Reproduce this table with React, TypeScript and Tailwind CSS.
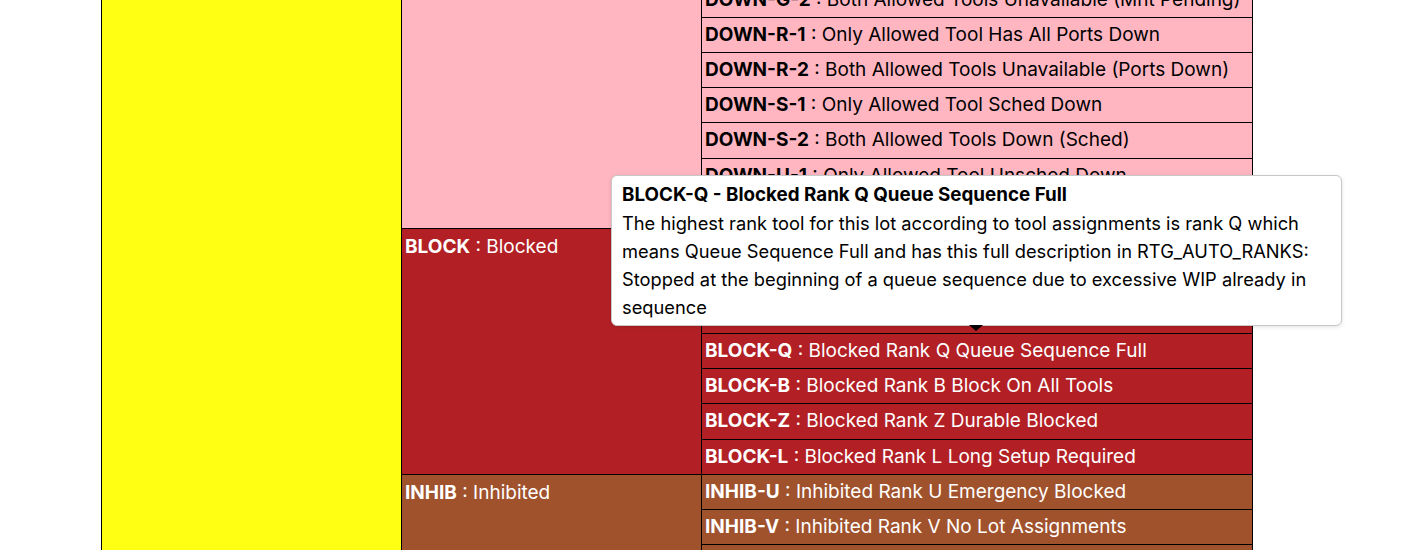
import React from "react";

type Row = { code: string; text: string };

type Group = {
  code: string;
  text: string;
  bg: string;
  fg: string;
  rows: Row[];
};

const groups: Group[] = [
  {
    code: "DOWN",
    text: "Down",
    bg: "bg-[#ffb6c1]",
    fg: "text-black",
    rows: [
      { code: "DOWN-M-1", text: "Only Allowed Tool Mnt Down" },
      { code: "DOWN-M-2", text: "Both Allowed Tools Down (Mnt)" },
      { code: "DOWN-G-1", text: "Only Allowed Tool Unavailable (Mnt Pending)" },
      { code: "DOWN-G-2", text: "Both Allowed Tools Unavailable (Mnt Pending)" },
      { code: "DOWN-R-1", text: "Only Allowed Tool Has All Ports Down" },
      { code: "DOWN-R-2", text: "Both Allowed Tools Unavailable (Ports Down)" },
      { code: "DOWN-S-1", text: "Only Allowed Tool Sched Down" },
      { code: "DOWN-S-2", text: "Both Allowed Tools Down (Sched)" },
      { code: "DOWN-U-1", text: "Only Allowed Tool Unsched Down" },
      { code: "DOWN-U-2", text: "Both Allowed Tools Down (Unsched)" },
    ],
  },
  {
    code: "BLOCK",
    text: "Blocked",
    bg: "bg-[#b22025]",
    fg: "text-white",
    rows: [
      { code: "BLOCK-C", text: "Blocked Rank C Carrier Hold" },
      { code: "BLOCK-D", text: "Blocked Rank D Dispatch Hold" },
      { code: "BLOCK-W", text: "Blocked Rank W Wafer Limit" },
      { code: "BLOCK-Q", text: "Blocked Rank Q Queue Sequence Full" },
      { code: "BLOCK-B", text: "Blocked Rank B Block On All Tools" },
      { code: "BLOCK-Z", text: "Blocked Rank Z Durable Blocked" },
      { code: "BLOCK-L", text: "Blocked Rank L Long Setup Required" },
    ],
  },
  {
    code: "INHIB",
    text: "Inhibited",
    bg: "bg-[#a0522d]",
    fg: "text-white",
    rows: [
      { code: "INHIB-U", text: "Inhibited Rank U Emergency Blocked" },
      { code: "INHIB-V", text: "Inhibited Rank V No Lot Assignments" },
      { code: "INHIB-X", text: "Inhibited Rank X Excluded By Rule" },
    ],
  },
];

const totalRows = groups.reduce((n, g) => n + g.rows.length, 0);

const Label = ({ code, text }: { code: string; text: string }) => (
  <>
    <b className="font-bold">{code}</b> : {text}
  </>
);

export default function App() {
  return (
    <div
      className="relative h-[550px] overflow-hidden bg-white text-[19px] text-black"
      style={{ fontFamily: "Inter, 'Liberation Sans', sans-serif" }}
    >
      <div className="-mt-[123.5px] pl-[101px]">
        <table className="w-[1151px] table-fixed border-collapse">
          <colgroup>
            <col className="w-[300px]" />
            <col className="w-[300px]" />
            <col className="w-[551px]" />
          </colgroup>
          <tbody>
            {groups.map((g, gi) =>
              g.rows.map((r, ri) => (
                <tr key={r.code}>
                  {gi === 0 && ri === 0 && (
                    <td
                      rowSpan={totalRows}
                      className="border border-black bg-[#ffff14] px-[3px] align-top leading-[35px] whitespace-nowrap"
                    >
                      <Label code="WAIT" text="Waiting" />
                    </td>
                  )}
                  {ri === 0 && (
                    <td
                      rowSpan={g.rows.length}
                      className={`border border-black px-[3px] align-top leading-[35px] whitespace-nowrap ${g.bg} ${g.fg}`}
                    >
                      <Label code={g.code} text={g.text} />
                    </td>
                  )}
                  <td
                    className={`h-[35.13px] border border-black px-[3px] align-middle leading-[34px] whitespace-nowrap ${g.bg} ${g.fg}`}
                  >
                    <Label code={r.code} text={r.text} />
                  </td>
                </tr>
              ))
            )}
          </tbody>
        </table>
      </div>

      {/* Tooltip */}
      <div className="absolute left-[611px] top-[175px] w-[731px] rounded-md border border-[#c8c8c8] bg-white px-[10px] pt-[5px] pb-[4px] text-[18.3px] leading-[28px] shadow-[0_1px_4px_rgba(0,0,0,0.12)]">
        <div className="text-[18.8px] font-bold">BLOCK-Q - Blocked Rank Q Queue Sequence Full</div>
        <div>
          The highest rank tool for this lot according to tool assignments is rank Q which
          <br />
          means Queue Sequence Full and has this full description in RTG_AUTO_RANKS:
          <br />
          Stopped at the beginning of a queue sequence due to excessive WIP already in
          <br />
          sequence
        </div>
        <div className="absolute left-[357px] top-full h-0 w-0 border-x-[7px] border-t-[6px] border-x-transparent border-t-black" />
      </div>
    </div>
  );
}
